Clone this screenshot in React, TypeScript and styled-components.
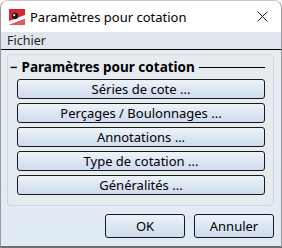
import React, { FC } from 'react';
import styled, { createGlobalStyle } from 'styled-components';

const GlobalStyle = createGlobalStyle`
  html, body {
    margin: 0;
    padding: 0;
    background: #ffffff;
  }
  body {
    font-family: 'Noto Sans', 'Open Sans', sans-serif;
    font-size: 13px;
    color: #000;
  }
`;

const entries = [
  'Séries de cote ...',
  'Perçages / Boulonnages ...',
  'Annotations ...',
  'Type de cotation ...',
  'Généralités ...'
];

const AppIcon: FC = () => (
  <svg width="16" height="16" viewBox="0 0 16 16">
    <rect x="0" y="0" width="16" height="16" fill="#d7262e" />
    <path d="M0 16 L0 12 L16 6 L16 10 Z" fill="#ffffff" />
    <path d="M0 16 L16 10 L16 16 Z" fill="#e8545b" />
    <circle cx="6" cy="7" r="3.2" fill="#1a1a1a" />
    <circle cx="5.2" cy="6.2" r="1.1" fill="#ffffff" />
  </svg>
);

const CloseIcon: FC = () => (
  <svg width="11" height="11" viewBox="0 0 11 11">
    <path d="M0.5 0.5 L10.5 10.5 M10.5 0.5 L0.5 10.5" stroke="#1a1a1a" strokeWidth="1" />
  </svg>
);

const App: FC = () => (
  <>
    <GlobalStyle />
    <Window>
      <TitleBar>
        <AppIcon />
        <Title>Paramètres pour cotation</Title>
        <CloseButton>
          <CloseIcon />
        </CloseButton>
      </TitleBar>
      <MenuBar>
        <MenuItem>Fichier</MenuItem>
      </MenuBar>
      <Body>
        <Group>
          <GroupHeader>
            <Collapse>−</Collapse>
            <GroupTitle>Paramètres pour cotation</GroupTitle>
            <HeaderRule />
          </GroupHeader>
          <ButtonList>
            {entries.map(label => (
              <WideButton key={label}>{label}</WideButton>
            ))}
          </ButtonList>
        </Group>
        <Footer>
          <DialogButton>OK</DialogButton>
          <DialogButton>Annuler</DialogButton>
        </Footer>
      </Body>
    </Window>
  </>
);

export default App;

const Window = styled('div')`
  width: 282px;
  height: 248px;
  box-sizing: border-box;
  display: flex;
  flex-direction: column;
  border: 1px solid #9a9a9a;
  border-top-color: #c8c8c8;
  border-radius: 8px 8px 0 0;
  border-bottom: 2px solid #6f6f6f;
  overflow: hidden;
  background: #e2eaf3;
`;

const TitleBar = styled('div')`
  height: 31px;
  display: flex;
  align-items: center;
  padding: 0 0 0 8px;
  background: #ffffff;
`;

const Title = styled('div')`
  flex: 1;
  margin-left: 5px;
  font-size: 13px;
  color: #000;
`;

const CloseButton = styled('div')`
  width: 30px;
  height: 31px;
  margin-right: 4px;
  display: flex;
  align-items: center;
  justify-content: center;
`;

const MenuBar = styled('div')`
  height: 17px;
  display: flex;
  align-items: center;
  background: #dfe6ed;
  border-bottom: 1px solid #000;
`;

const MenuItem = styled('div')`
  padding: 0 6px;
  font-size: 12.5px;
  color: #1e1e1e;
`;

const Body = styled('div')`
  flex: 1;
  display: flex;
  flex-direction: column;
  padding: 4px 7px 8px 6px;
  background: linear-gradient(#e6ecf2, #e0eaf6);
`;

const Group = styled('div')`
  height: 152px;
  box-sizing: border-box;
  padding: 3px 8px 0 2px;
  border: 1px solid #cfd5dc;
  border-radius: 4px;
  background: #e6ebf0;
`;

const GroupHeader = styled('div')`
  height: 18px;
  display: flex;
  align-items: center;
`;

const Collapse = styled('span')`
  font-weight: bold;
  font-size: 13px;
  margin-right: 4px;
`;

const GroupTitle = styled('span')`
  font-weight: bold;
  font-size: 13.5px;
`;

const HeaderRule = styled('div')`
  flex: 1;
  height: 1px;
  margin-left: 4px;
  background: #000;
`;

const ButtonList = styled('div')`
  display: flex;
  flex-direction: column;
  gap: 4px;
  margin: 3px 0 0 7px;
`;

const WideButton = styled('div')`
  height: 20px;
  box-sizing: border-box;
  display: flex;
  align-items: center;
  justify-content: center;
  border: 1px solid #1a1a1a;
  border-radius: 3px;
  background: linear-gradient(#eef3fa, #dce6f3 50%, #cfdcee);
  font-size: 13px;
`;

const Footer = styled('div')`
  flex: 1;
  display: flex;
  justify-content: flex-end;
  align-items: flex-end;
  gap: 9px;
`;

const DialogButton = styled(WideButton)`
  width: 80px;
  height: 24px;
`;
